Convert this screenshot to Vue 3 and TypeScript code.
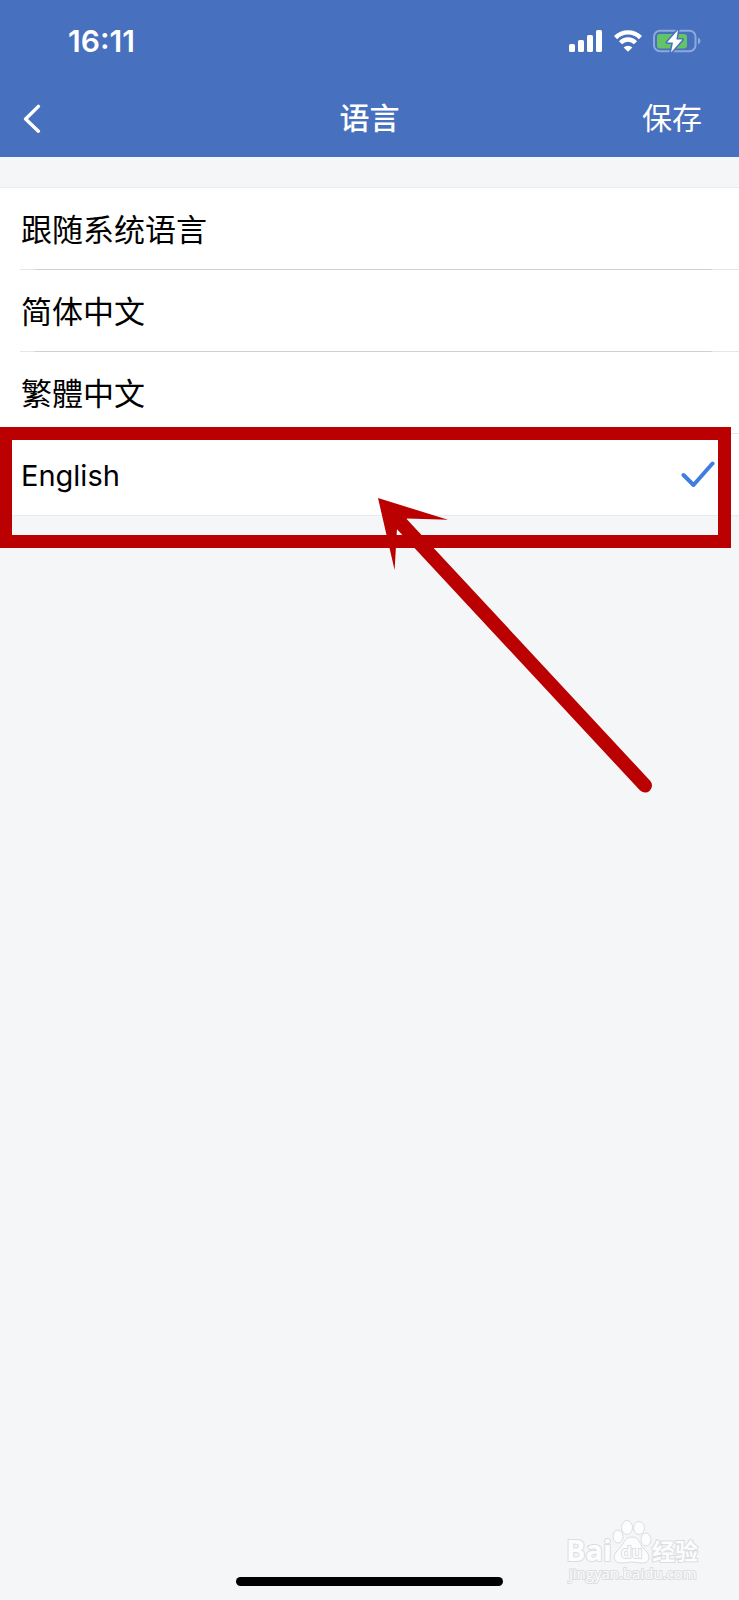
<script setup lang="ts">
import { ref } from 'vue'

interface LanguageOption {
  value: string
  label: string
  lang: string
}

const options: LanguageOption[] = [
  { value: 'system', label: '跟随系统语言', lang: 'zh-CN' },
  { value: 'zh-hans', label: '简体中文', lang: 'zh-CN' },
  { value: 'zh-hant', label: '繁體中文', lang: 'zh-TW' },
  { value: 'en', label: 'English', lang: 'en' },
]

const selected = ref('en')
const highlighted = 'en'
</script>

<template>
  <div class="screen">
    <header class="header">
      <div class="status">
        <time class="clock">16:11</time>
        <div class="indicators">
          <svg class="signal" viewBox="0 0 34 22" aria-hidden="true">
            <rect x="0" y="14" width="6" height="8" rx="1.6" />
            <rect x="9" y="10" width="6" height="12" rx="1.6" />
            <rect x="18" y="5" width="6" height="17" rx="1.6" />
            <rect x="27" y="0" width="6" height="22" rx="1.6" />
          </svg>
          <svg class="wifi" viewBox="0 0 28 22" aria-hidden="true">
            <path d="M1.6 7.6 A17.3 17.3 0 0 1 26.4 7.6" />
            <path d="M6.5 12.8 A10.3 10.3 0 0 1 21.5 12.8" />
            <path class="dot" d="M14 21.8 L9.6 17.4 A6.4 6.4 0 0 1 18.4 17.4 Z" />
          </svg>
          <svg class="battery" viewBox="0 0 48 24" aria-hidden="true">
            <rect class="shell" x="1" y="1.7" width="41.5" height="20.6" rx="6" />
            <path class="tip" d="M45 8.6 Q47.6 9.8 47.6 12 Q47.6 14.2 45 15.4 Z" />
            <rect class="charge" x="4" y="5" width="30" height="14.5" rx="3" />
            <path class="bolt" d="M25 1 L14 13.4 H20 L18 23.4 L29.4 10.6 H23.4 Z" />
          </svg>
        </div>
      </div>
      <nav class="nav">
        <button class="back" type="button" aria-label="返回">
          <svg viewBox="0 0 18 30" aria-hidden="true"><path d="M15.4 2.4 L2.6 15 L15.4 27.2" /></svg>
        </button>
        <h1 class="title">语言</h1>
        <button class="save" type="button">保存</button>
      </nav>
    </header>

    <main class="list">
      <label v-for="option in options" :key="option.value" class="option">
        <input v-model="selected" class="radio" type="radio" name="language" :value="option.value" />
        <span class="label" :class="{ latin: option.lang === 'en' }" :lang="option.lang">{{ option.label }}</span>
        <svg v-if="selected === option.value" class="check" viewBox="0 0 34 28" aria-hidden="true">
          <path d="M2.5 14 L12.5 24 L31.5 2.5" />
        </svg>
        <span v-if="option.value === highlighted" class="frame"></span>
        <svg v-if="option.value === highlighted" class="arrow" viewBox="0 0 276 296" aria-hidden="true">
          <path d="M1 0 L71 21.8 L30 20.5 L20 30.5 L17.6 72 Z" />
          <path class="shaft" d="M21 22 L268 287.5" />
        </svg>
      </label>
    </main>

    <div class="home"></div>

    <svg class="watermark" viewBox="0 0 140 70" aria-label="Baidu 经验">
      <g class="paw">
        <ellipse cx="51" cy="21.5" rx="5" ry="6.5" />
        <ellipse cx="60" cy="12.5" rx="5.5" ry="7" />
        <ellipse cx="72" cy="13" rx="5.5" ry="6.5" />
        <ellipse cx="79" cy="24.5" rx="5" ry="6.5" />
        <path d="M65 22 C57 22 57 30 51 35 C45 40 46 48 54 48 C59 48 61 47 65 47 C69 47 71 48 76 48 C83 48 84 40 78 35 C72 30 73 22 65 22 Z" />
      </g>
      <text class="brand" x="-1" y="46">Bai</text>
      <text class="du" x="54" y="43">du</text>
      <text class="cjk" x="85" y="45">经验</text>
      <text class="site" x="2" y="64">jingyan.baidu.com</text>
    </svg>
  </div>
</template>

<style>
body {
  margin: 0;
  background: #f4f6f8;
}
</style>

<style scoped>
.screen {
  position: relative;
  display: flex;
  flex-direction: column;
  min-height: 100vh;
  overflow: hidden;
  background: #f4f6f8;
  color: #000;
  font-family: Inter, "Noto Sans CJK SC", sans-serif;
}

.header {
  background: #4770be;
  color: #fff;
}

.status {
  display: flex;
  align-items: center;
  justify-content: space-between;
  height: 81px;
  padding: 0 38px 0 68px;
}

.clock {
  font-size: 30px;
  font-weight: 600;
  line-height: 32px;
}

.indicators {
  display: flex;
  align-items: center;
  gap: 11px;
}

.signal {
  width: 34px;
  height: 22px;
  fill: #fff;
}

.wifi {
  width: 28px;
  height: 22px;
  fill: none;
  stroke: #fff;
  stroke-width: 4.4;
}

.wifi .dot {
  fill: #fff;
  stroke: none;
}

.battery {
  width: 48px;
  height: 24px;
}

.shell {
  fill: none;
  stroke: #8ea8db;
  stroke-width: 2;
}

.tip {
  fill: #8ea8db;
}

.charge {
  fill: #62c466;
}

.bolt {
  fill: #fff;
  stroke: #4770be;
  stroke-width: 3;
  stroke-linejoin: round;
  paint-order: stroke;
}

.nav {
  display: grid;
  grid-template-columns: 1fr auto 1fr;
  align-items: center;
  height: 76px;
  padding: 0 37px 0 23px;
}

.back,
.save {
  margin: 0;
  padding: 0;
  border: 0;
  background: none;
  color: inherit;
  font: inherit;
  cursor: pointer;
}

.back {
  display: flex;
  width: 18px;
  height: 30px;
}

.back svg {
  width: 18px;
  height: 30px;
  fill: none;
  stroke: #fff;
  stroke-width: 3.4;
  stroke-linecap: round;
  stroke-linejoin: round;
}

.title {
  margin: 0 -14px 0 0;
  padding-bottom: 3px;
  font-size: 30px;
  font-weight: 500;
  line-height: 40px;
}

.save {
  justify-self: end;
  padding-bottom: 3px;
  font-size: 30px;
  line-height: 40px;
}

.list {
  margin-top: 30px;
  border-top: 1px solid #e9ebed;
  background: #fff;
}

.option {
  position: relative;
  display: flex;
  align-items: center;
  justify-content: space-between;
  height: 82px;
  padding: 0 24px 0 21px;
  cursor: pointer;
}

.option::after {
  position: absolute;
  right: 0;
  bottom: 0;
  left: 20px;
  height: 1px;
  background: linear-gradient(to right, #e6e6e6 14px, #d0d0d2 16px calc(100% - 28px), #e6e6e6 calc(100% - 26px));
  content: "";
}

.option:last-child::after {
  left: 0;
  background: #e9ebed;
}

.radio {
  position: absolute;
  width: 1px;
  height: 1px;
  margin: 0;
  opacity: 0;
}

.label {
  padding-top: 2px;
  font-size: 31px;
  line-height: 40px;
}

.label.latin {
  font-size: 29px;
}

.check {
  width: 34px;
  height: 28px;
  fill: none;
  stroke: #417de0;
  stroke-width: 4;
  stroke-linecap: round;
  stroke-linejoin: round;
}

.frame {
  position: absolute;
  z-index: 1;
  top: -7px;
  right: 8px;
  bottom: -32px;
  left: -1px;
  border: 13px solid #ba0000;
  pointer-events: none;
}

.arrow {
  position: absolute;
  z-index: 2;
  top: 64px;
  left: 51%;
  width: 276px;
  height: 296px;
  fill: #ba0000;
  pointer-events: none;
}

.arrow .shaft {
  fill: none;
  stroke: #ba0000;
  stroke-width: 14;
  stroke-linecap: round;
}

.home {
  width: 36%;
  height: 9px;
  margin: auto auto 14px;
  border-radius: 5px;
  background: #000;
}

.watermark {
  position: absolute;
  right: 32px;
  bottom: 15px;
  width: 140px;
  height: 70px;
  fill: #fcfdfd;
  stroke: #dbdde0;
  stroke-width: 1;
}

.watermark text {
  stroke-width: 2;
  paint-order: stroke;
}

.watermark .brand {
  font: 700 29px "Open Sans", sans-serif;
}

.watermark .du {
  font: 600 17px "Open Sans", sans-serif;
}

.watermark .cjk {
  font: 700 23px "Noto Sans CJK SC", sans-serif;
}

.watermark .site {
  font: 400 15px "Open Sans", sans-serif;
}
</style>
